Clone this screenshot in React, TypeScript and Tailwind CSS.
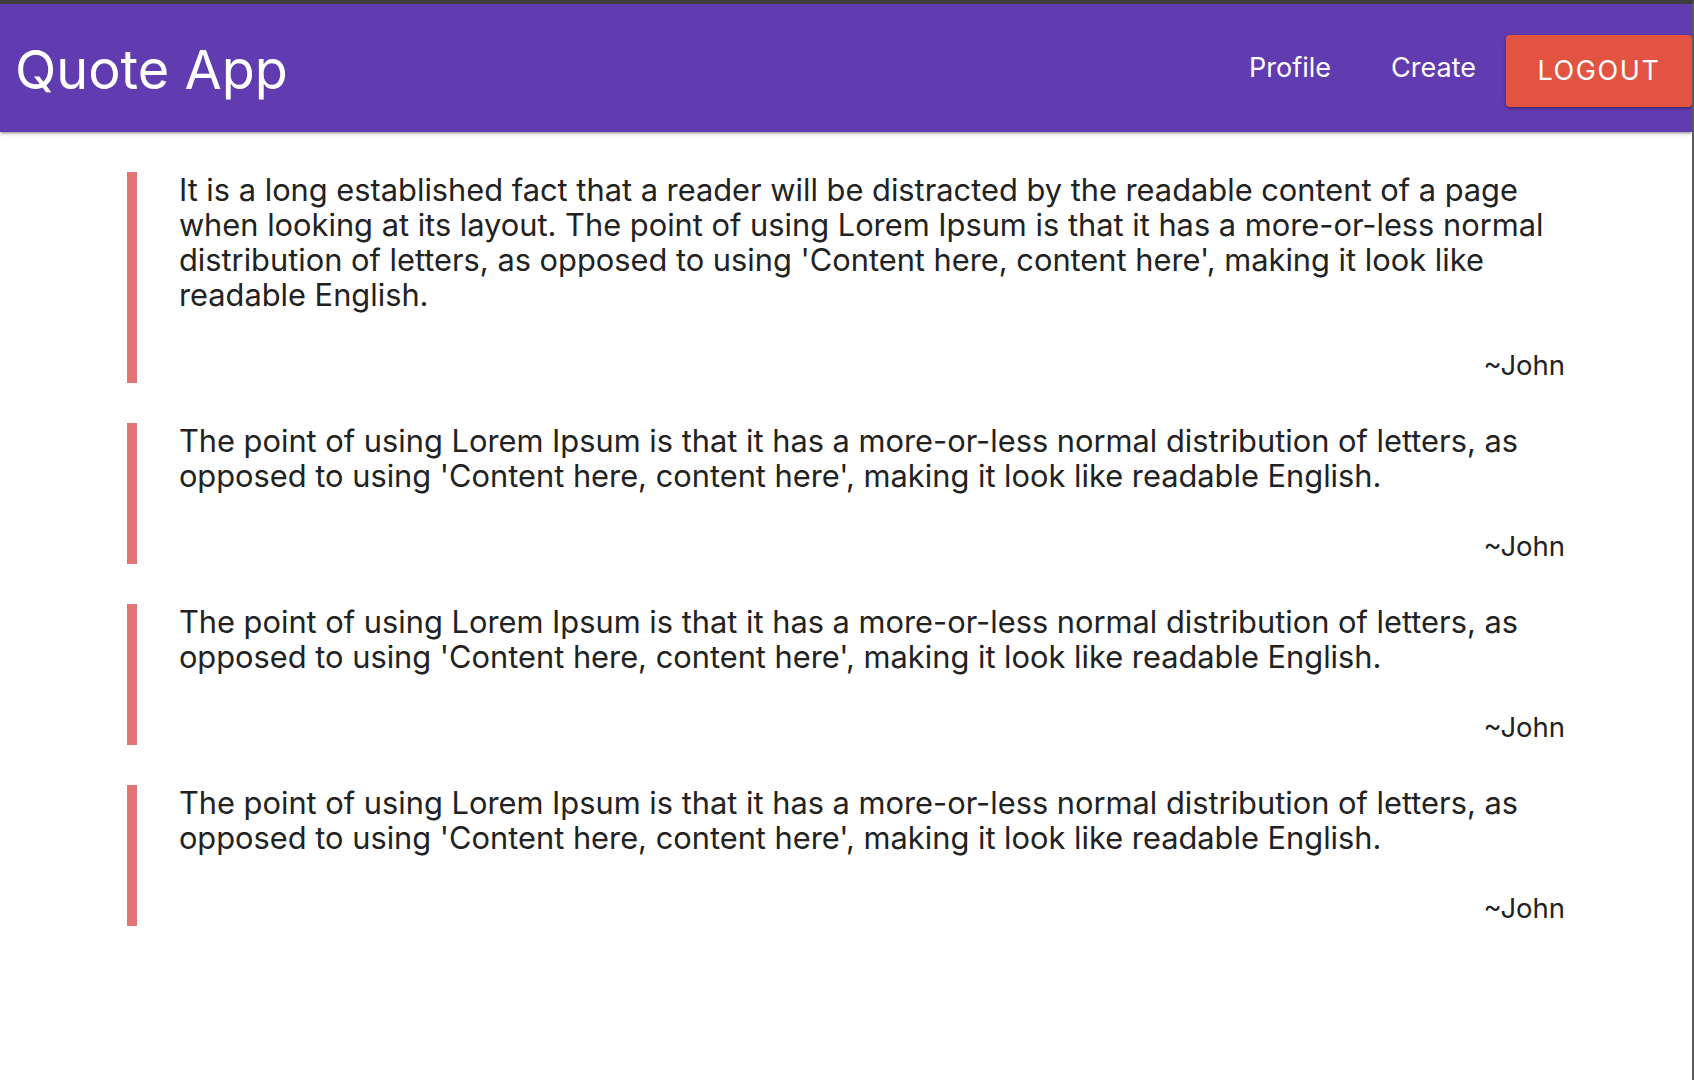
const quotes = [
  {
    text: "It is a long established fact that a reader will be distracted by the readable content of a page when looking at its layout. The point of using Lorem Ipsum is that it has a more-or-less normal distribution of letters, as opposed to using 'Content here, content here', making it look like readable English.",
    by: "John",
  },
  {
    text: "The point of using Lorem Ipsum is that it has a more-or-less normal distribution of letters, as opposed to using 'Content here, content here', making it look like readable English.",
    by: "John",
  },
  {
    text: "The point of using Lorem Ipsum is that it has a more-or-less normal distribution of letters, as opposed to using 'Content here, content here', making it look like readable English.",
    by: "John",
  },
  {
    text: "The point of using Lorem Ipsum is that it has a more-or-less normal distribution of letters, as opposed to using 'Content here, content here', making it look like readable English.",
    by: "John",
  },
];

function Navbar() {
  return (
    <nav className="relative z-10 flex h-[128px] items-center justify-between bg-[#613cb0] shadow-[0_2px_2px_0_rgba(0,0,0,0.14),0_3px_1px_-2px_rgba(0,0,0,0.12),0_1px_5px_0_rgba(0,0,0,0.2)]">
      <a href="#" className="pt-[4px] pl-[15px] text-[54px] leading-none font-normal text-white">
        Quote App
      </a>
      <ul className="flex h-full items-center">
        <li>
          <a href="#" className="block px-[30px] text-[27px] text-white">
            Profile
          </a>
        </li>
        <li>
          <a href="#" className="block px-[30px] text-[27px] text-white">
            Create
          </a>
        </li>
        <li className="mt-[6px]">
          <button className="flex h-[72px] w-[186px] items-center justify-center rounded-[4px] bg-[#e35342] text-[27px] tracking-[0.06em] text-white uppercase shadow-[0_2px_2px_0_rgba(0,0,0,0.14),0_3px_1px_-2px_rgba(0,0,0,0.12),0_1px_5px_0_rgba(0,0,0,0.2)]">
            Logout
          </button>
        </li>
      </ul>
    </nav>
  );
}

export default function App() {
  return (
    <div
      className="h-[1080px] overflow-hidden border-t-4 border-r-2 border-t-[#3d3d3d] border-r-[#5b5b5b] bg-white"
      style={{ fontFamily: "Inter, 'Noto Sans', sans-serif" }}
    >
      <Navbar />
      <main className="mx-auto w-[85%] pt-[40px]">
        {quotes.map((q, i) => (
          <blockquote
            key={i}
            className="mb-[40px] border-l-[10px] border-[#e17575] pl-[42px]"
          >
            <p className="text-[30.8px] leading-[35px] text-[#222]">{q.text}</p>
            <p className="mt-[35px] text-right text-[27.5px] leading-[36px] text-[#222]">
              ~{q.by}
            </p>
          </blockquote>
        ))}
      </main>
    </div>
  );
}
